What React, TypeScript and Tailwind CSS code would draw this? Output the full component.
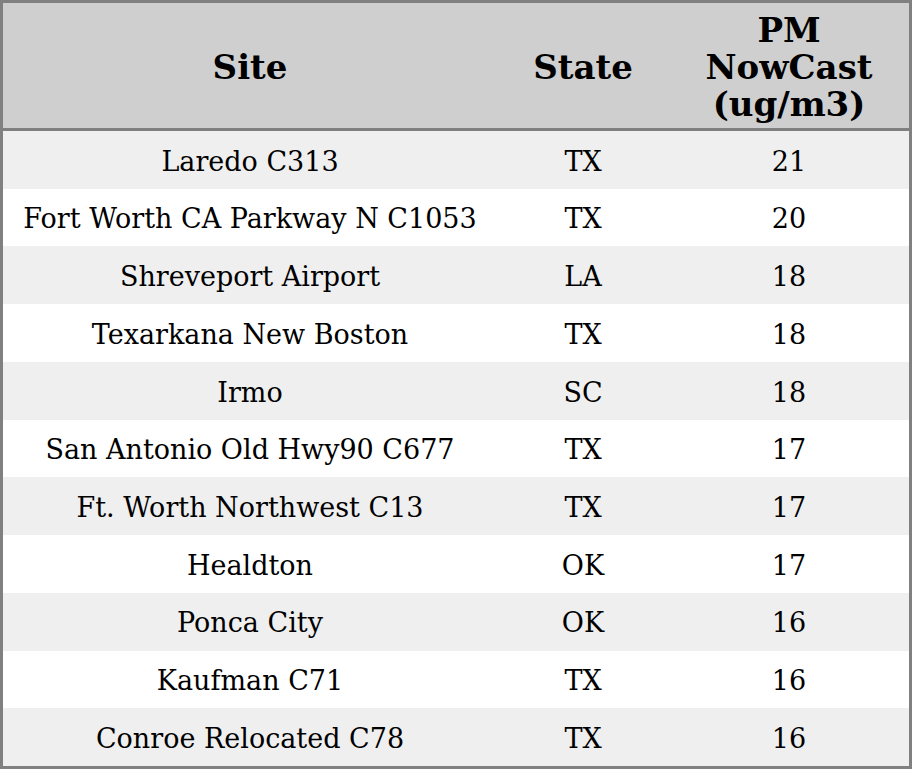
const ROWS: [string, string, number][] = [
  ['Laredo C313', 'TX', 21],
  ['Fort Worth CA Parkway N C1053', 'TX', 20],
  ['Shreveport Airport', 'LA', 18],
  ['Texarkana New Boston', 'TX', 18],
  ['Irmo', 'SC', 18],
  ['San Antonio Old Hwy90 C677', 'TX', 17],
  ['Ft. Worth Northwest C13', 'TX', 17],
  ['Healdton', 'OK', 17],
  ['Ponca City', 'OK', 16],
  ['Kaufman C71', 'TX', 16],
  ['Conroe Relocated C78', 'TX', 16],
];

export default function App() {
  return (
    <div className="w-[912px] h-[769px] border-[3px] border-[#808080] bg-white text-black font-['DejaVu_Serif',serif] flex flex-col">
      {/* header */}
      <div className="grid grid-cols-[494px_172px_240px] h-[128px] shrink-0 bg-[#cfcfcf] border-b-[3px] border-[#808080] font-bold text-[34px] leading-[37px] text-center">
        <div className="flex items-center justify-center pt-1">Site</div>
        <div className="flex items-center justify-center pt-1">State</div>
        <div className="flex items-center justify-center pt-1">
          PM
          <br />
          NowCast
          <br />
          (ug/m3)
        </div>
      </div>

      {/* rows */}
      <div className="flex-1 flex flex-col text-[27px]">
        {ROWS.map(([site, state, val], i) => (
          <div
            key={site}
            className={`flex-1 grid grid-cols-[494px_172px_240px] items-center text-center pt-1 ${
              i % 2 === 0 ? 'bg-[#efefef]' : 'bg-white'
            }`}
          >
            <div>{site}</div>
            <div>{state}</div>
            <div>{val}</div>
          </div>
        ))}
      </div>
    </div>
  );
}
